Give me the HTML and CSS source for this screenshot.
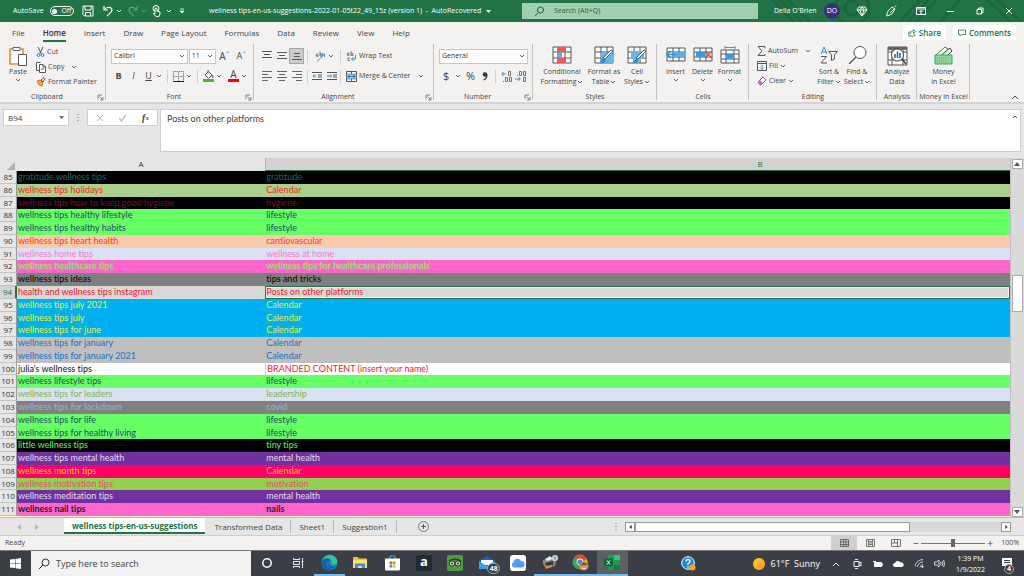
FILE: index.html
```html
<!DOCTYPE html>
<html lang="en">
<head>
<meta charset="utf-8">
<title>wellness tips - Excel</title>
<link rel="stylesheet" href="styles.css">
</head>
<body>
<svg class="defs" aria-hidden="true">
  <symbol id="chev" viewBox="0 0 6 6"><path d="M1 2l2 2 2-2" fill="none" stroke="currentColor"/></symbol>
  <symbol id="launch" viewBox="0 0 7 7"><path d="M1 5V1h4M2.500 2.500l3 3M6 3v3H3" fill="none" stroke="#666" stroke-width=".8"/></symbol>
  <symbol id="gridicon" viewBox="0 0 20 18"><path d="M1 1h18v16H1zM1 6h18M1 12h18M7 1v16M13 1v16" fill="#fff" stroke="#555"/></symbol>
  <symbol id="brush" viewBox="0 0 20 18"><path d="M19 5L11 13l-2-1 8-8z" fill="#fff" stroke="#555"/><path d="M10 12c-3 0-2 4-5 4 3 2 7 1 7-2z" fill="#2b8fd8"/></symbol>
</svg>
<div class="app">
  <header class="titlebar">
    <div class="quick">
      <span class="autosave">AutoSave</span>
      <button class="toggle" aria-label="AutoSave off"><i></i>Off</button>
      <button class="q-save" aria-label="Save"><svg width="12" height="12" viewBox="0 0 12 12"><path d="M1 1h10v10H2.500L1 9.500zM3 1v4h6V1M3.500 11V7.500h5V11" fill="none" stroke="#fff"/></svg></button>
      <button class="q-undo" aria-label="Undo"><svg width="12" height="12" viewBox="0 0 12 12"><path d="M2 1v4h4M2 5c3-4 8-3 8 0 0 2-2 3-5 6" fill="none" stroke="#fff" stroke-width="1.200"/></svg><svg class="chev"><use href="#chev"/></svg></button>
      <button class="q-redo" aria-label="Redo"><svg width="12" height="12" viewBox="0 0 12 12"><path d="M10 1v4H6M10 5c-3-4-8-3-8 0 0 2 2 3 5 6" fill="none" stroke="#fff" stroke-width="1.200"/></svg><svg class="chev"><use href="#chev"/></svg></button>
      <button class="q-touch" aria-label="Touch mode"><svg width="10" height="12" viewBox="0 0 10 12"><circle cx="4" cy="3.500" r="3" fill="none" stroke="#fff"/><path d="M3 9V3.500q1-1 2 0V6l3 1v2l-1 2.500H4L1 8z" fill="#217346" stroke="#fff"/></svg><svg class="chev"><use href="#chev"/></svg></button>
      <button class="q-more" aria-label="Customize toolbar"><svg width="6" height="6" viewBox="0 0 6 6"><path d="M1 1h4M1 3l2 2 2-2z" fill="#fff" stroke="#fff" stroke-width=".8"/></svg></button>
    </div>
    <div class="doc-title">wellness tips-en-us-suggestions-2022-01-05t22_49_15z (version 1) &nbsp;- &nbsp;AutoRecovered <svg width="5" height="5" viewBox="0 0 5 5"><path d="M0 1h5L2.500 4z" fill="#fff"/></svg></div>
    <label class="search"><svg width="11" height="11" viewBox="0 0 11 11"><circle cx="6.500" cy="4" r="3" fill="none" stroke="#1c643c"/><path d="M4.500 6.500L1 10" stroke="#1c643c"/></svg><input type="text" aria-label="Search" placeholder="Search (Alt+Q)"></label>
    <div class="account">
      <svg class="art" viewBox="0 0 266 22" preserveAspectRatio="xMaxYMid slice" aria-hidden="true"><g fill="none" stroke="#1d673f" stroke-width="3"><circle cx="94" cy="8" r="17"/><circle cx="94" cy="8" r="7"/><path d="M10-4l26 26M18-4l26 26M26-4l26 26M140 24l26-28M148 24l26-28M156 24l26-28M180 24l26-28M225-4l30 28M235-4l30 28"/></g></svg>
      <span class="user">Della O'Brien</span><span class="avatar">DO</span>
      <div class="win">
        <button aria-label="Premium"><svg width="12" height="11" viewBox="0 0 12 11"><path d="M3 1h6l2 3-5 6-5-6zM1 4h10M4 4l2 6 2-6-2-3z" fill="none" stroke="#fff"/></svg></button>
        <button aria-label="Draw"><svg width="12" height="12" viewBox="0 0 12 12"><path d="M1.500 11L3 6l4-4 3 2-3 5-5 2M5 8l5-5M11 .5L9.500 2" fill="none" stroke="#fff" stroke-width=".9"/></svg></button>
        <button aria-label="Ribbon display"><svg width="10" height="8" viewBox="0 0 10 8"><path d="M.5.5h9v7h-9zM1 2h8M5 7V3.500M3.500 5L5 3.500 6.500 5" fill="none" stroke="#fff"/></svg></button>
        <button aria-label="Minimize"><svg width="7" height="7" viewBox="0 0 7 7"><path d="M0 3.500h7" stroke="#fff"/></svg></button>
        <button aria-label="Restore"><svg width="8" height="8" viewBox="0 0 8 8"><path d="M1 2.500h4.500V7H1zM2.500 2V1H7v4.500H6" fill="none" stroke="#fff"/></svg></button>
        <button aria-label="Close"><svg width="8" height="8" viewBox="0 0 8 8"><path d="M1 1l6 6M7 1L1 7" stroke="#fff"/></svg></button>
      </div>
    </div>
  </header>

  <nav class="tabs">
    <a href="#">File</a><a href="#" class="on">Home</a><a href="#">Insert</a><a href="#">Draw</a><a href="#">Page Layout</a><a href="#">Formulas</a><a href="#">Data</a><a href="#">Review</a><a href="#">View</a><a href="#">Help</a>
    <div class="share">
      <button><svg width="8" height="8" viewBox="0 0 8 8"><path d="M2.500 3H.8v4h6V5M2.500 5c0-2 1-3 3-3V.5L7.500 3l-2 1.500V3" fill="none" stroke="#217346" stroke-width=".8"/></svg>Share</button>
      <button><svg width="8" height="8" viewBox="0 0 8 8"><path d="M.5 1h7v4.500H3.500L2 7V5.500H.5z" fill="none" stroke="#217346" stroke-width=".8"/></svg>Comments</button>
    </div>
  </nav>

  <section class="ribbon">
    <div class="group g-clip">
      <div class="body">
        <button class="big paste"><svg width="20" height="20" viewBox="0 0 20 20"><path d="M2 3h13v15H2z" fill="#fff" stroke="#ed8a2c" stroke-width="1.600"/><path d="M5 1.500h7v3H5z" fill="#fff" stroke="#666"/><path d="M10.500 8.500h8v11h-8z" fill="#fff" stroke="#555"/></svg><span>Paste</span><svg class="chev"><use href="#chev"/></svg></button>
        <div class="stack">
          <button><svg width="9" height="10" viewBox="0 0 9 10"><path d="M2 0l3.500 7M7 0L3.500 7" stroke="#555"/><circle cx="2.500" cy="8" r="1.500" fill="none" stroke="#2b8fd8"/><circle cx="6.500" cy="8" r="1.500" fill="none" stroke="#2b8fd8"/></svg>Cut</button>
          <button><svg width="10" height="11" viewBox="0 0 10 11"><path d="M3.500 8.500h-3V.5h4M3.500 2.500h3.500l2.500 2.500v5.500h-6zM7 2.500V5h2.500M5 7h3" fill="#fff" stroke="#555"/></svg>Copy <svg class="chev far"><use href="#chev"/></svg></button>
          <button><svg width="10" height="10" viewBox="0 0 10 10"><path d="M1 4l3-1 3 3-1 3-3-1z" fill="#f5a55a" stroke="#e07010"/><path d="M5 3l3-2.500 1 1L7 5z" fill="#fff" stroke="#555"/></svg>Format Painter</button>
        </div>
      </div>
      <div class="foot">Clipboard<svg class="launch"><use href="#launch"/></svg></div>
    </div>

    <div class="group g-font">
      <div class="rows">
        <div class="row r-font1"><button class="combo w-font">Calibri<svg class="chev"><use href="#chev"/></svg></button><button class="combo w-size">11<svg class="chev"><use href="#chev"/></svg></button><button class="grow" aria-label="Increase font">A<sup>ˆ</sup></button><button class="shrink" aria-label="Decrease font">A<sup>ˇ</sup></button></div>
        <div class="row r-font2"><button><b>B</b></button><button><em>I</em></button><button><u>U</u></button><svg class="chev"><use href="#chev"/></svg><i class="sep"></i>
          <button aria-label="Borders"><svg width="11" height="11" viewBox="0 0 11 11"><path d="M.5 0v10M10.500 0v10M0 .5h11M5.500 1v9M1 5.500h9" stroke="#888" stroke-dasharray="1.500 .5" fill="none"/><path d="M0 10.500h11" stroke="#222"/></svg></button><svg class="chev"><use href="#chev"/></svg><i class="sep"></i>
          <button aria-label="Fill color"><svg width="11" height="12" viewBox="0 0 11 12"><path d="M2 5l3.500-3.500L9 5 5.500 8.500zM5 0v3" fill="#fff" stroke="#555"/><path d="M9.500 5v3" stroke="#2b8fd8" stroke-width="1.500"/><path d="M0 10.500h11" stroke="#55b030" stroke-width="3"/></svg></button><svg class="chev"><use href="#chev"/></svg>
          <button class="fontcol" aria-label="Font color">A</button><svg class="chev"><use href="#chev"/></svg></div>
      </div>
      <div class="foot">Font<svg class="launch"><use href="#launch"/></svg></div>
    </div>

    <div class="group g-align">
      <div class="rows">
        <div class="row r-al">
          <button aria-label="Top align"><svg width="10" height="10" viewBox="0 0 10 10"><path d="M0 .5h10M2 3.500h6M0 6.500h10" stroke="#555"/></svg></button>
          <button aria-label="Middle align"><svg width="10" height="10" viewBox="0 0 10 10"><path d="M0 1.500h10M2 4.500h6M0 7.500h10" stroke="#555"/></svg></button>
          <button class="pressed" aria-label="Bottom align"><svg width="10" height="10" viewBox="0 0 10 10"><path d="M2 5.500h6M0 8.500h10M2 2.500h6" stroke="#555"/></svg></button><i class="sep"></i>
          <button class="wide" aria-label="Orientation"><svg width="11" height="11" viewBox="0 0 11 11"><path d="M1 3.500q2-1.500 2 .5v1.500q-2.500 0-2-1.500M5 .5v4.500h2V3H5" stroke="#555" stroke-width=".8" fill="none"/><path d="M2 10.500l7.500-7.500M6.500 3H9.500V6" stroke="#2b8fd8" fill="none"/></svg><svg class="chev"><use href="#chev"/></svg></button><i class="sep"></i>
          <button class="lbl"><svg width="11" height="11" viewBox="0 0 11 11"><path d="M1 2.500q2-1.500 2 .5v1.500q-2.500 0-2-1.500M5 0v4.500h2V2.500H5M4 7H2v2.500h2" stroke="#555" stroke-width=".8" fill="none"/><path d="M9.500 4v4H5.500M7.500 6l-2 2 2 2" stroke="#2b8fd8" fill="none"/></svg>Wrap Text</button>
        </div>
        <div class="row r-al">
          <button aria-label="Align left"><svg width="10" height="10" viewBox="0 0 10 10"><path d="M0 .5h10M0 3.500h6M0 6.500h10M0 9.500h6" stroke="#666"/></svg></button>
          <button aria-label="Center"><svg width="10" height="10" viewBox="0 0 10 10"><path d="M0 .5h10M2 3.500h6M0 6.500h10M2 9.500h6" stroke="#666"/></svg></button>
          <button aria-label="Align right"><svg width="10" height="10" viewBox="0 0 10 10"><path d="M0 .5h10M4 3.500h6M0 6.500h10M4 9.500h6" stroke="#666"/></svg></button><i class="sep"></i>
          <button class="wide two" aria-label="Indent"><svg width="10" height="10" viewBox="0 0 10 10"><path d="M0 1.500h10M6 4h4M6 6h4M0 8.500h10" stroke="#555"/><path d="M4.500 5H1M2.500 3.500L1 5l1.500 1.500" stroke="#2b8fd8" fill="none"/></svg><svg width="10" height="10" viewBox="0 0 10 10"><path d="M0 1.500h10M6 4h4M6 6h4M0 8.500h10" stroke="#555"/><path d="M0 5h4.500M3 3.500L4.500 5 3 6.500" stroke="#2b8fd8" fill="none"/></svg></button><i class="sep"></i>
          <button class="lbl"><svg width="11" height="11" viewBox="0 0 11 11"><path d="M.5.5h10v10H.5zM5.500 0v11" fill="#fff" stroke="#555"/><path d="M.5 3h10v5H.5z" fill="#9fd0f2" stroke="#555" stroke-width=".6"/><path d="M2 5.500h7M3.500 4L2 5.500 3.500 7M7.500 4L9 5.500 7.500 7" fill="none" stroke="#1c78c0"/></svg>Merge &amp; Center <svg class="chev"><use href="#chev"/></svg></button>
        </div>
      </div>
      <div class="foot">Alignment<svg class="launch"><use href="#launch"/></svg></div>
    </div>

    <div class="group g-num">
      <div class="rows">
        <div class="row"><button class="combo w-num">General<svg class="chev"><use href="#chev"/></svg></button></div>
        <div class="row r-num"><button>$</button><svg class="chev"><use href="#chev"/></svg><button>%</button><button aria-label="Comma style"><svg width="6" height="9" viewBox="0 0 6 9"><circle cx="3" cy="2.500" r="2.300" fill="#333"/><path d="M5 2.500q0 4-3.500 5.500" fill="none" stroke="#333" stroke-width="1.200"/></svg></button><i class="sep"></i>
          <button aria-label="Increase decimal"><svg width="11" height="11" viewBox="0 0 11 11"><path d="M5 3H1M2.500 1L.8 3l1.700 2" fill="none" stroke="#2b8fd8"/><path d="M7.500.5h2v4h-2zM4.500 6.500h2v4h-2zM8.500 6.500h2v4h-2zM2 10.500h1" fill="none" stroke="#555" stroke-width=".8"/></svg></button>
          <button aria-label="Decrease decimal"><svg width="11" height="11" viewBox="0 0 11 11"><path d="M0 8h5M3.500 6l1.700 2-1.700 2" fill="none" stroke="#2b8fd8"/><path d="M4.500.5h2v4h-2zM8.500.5h2v4h-2zM8.500 6.500h2v4h-2zM2 4.500h1" fill="none" stroke="#555" stroke-width=".8"/></svg></button></div>
      </div>
      <div class="foot">Number<svg class="launch"><use href="#launch"/></svg></div>
    </div>

    <div class="group g-styles">
      <div class="body">
        <button class="big w-a"><svg width="20" height="18" viewBox="0 0 20 18"><use href="#gridicon"/><path d="M5 1h9v5H5zM5 12h9v5H5z" fill="#f0595c"/><path d="M5 6.500h5v5H5z" fill="#5aaee8"/></svg><span>Conditional</span><span>Formatting<svg class="chev"><use href="#chev"/></svg></span></button>
        <button class="big w-b"><svg width="20" height="18" viewBox="0 0 20 18"><use href="#gridicon"/><path d="M7 6h12v11H7z" fill="#6ab5ea"/><use href="#brush"/></svg><span>Format as</span><span>Table<svg class="chev"><use href="#chev"/></svg></span></button>
        <button class="big w-c"><svg width="20" height="18" viewBox="0 0 20 18"><use href="#gridicon"/><path d="M4 5h13v8H4z" fill="#6ab5ea"/><use href="#brush"/></svg><span>Cell</span><span>Styles<svg class="chev"><use href="#chev"/></svg></span></button>
      </div>
      <div class="foot">Styles</div>
    </div>

    <div class="group g-cells">
      <div class="body">
        <button class="big w-d"><svg width="20" height="18" viewBox="0 0 20 18"><path d="M1 2h18v13H1zM1 6h18M1 11h18M7 2v13M13 2v13" fill="#fff" stroke="#555"/><path d="M6 6h13v5H6z" fill="#5aaee8"/><path d="M9 8.500H1M4.500 5L1 8.500 4.500 12" fill="none" stroke="#2b8fd8" stroke-width="1.500"/></svg><span>Insert</span><svg class="chev"><use href="#chev"/></svg></button>
        <button class="big w-d"><svg width="20" height="18" viewBox="0 0 20 18"><path d="M1 2h18v13H1zM1 6h18M1 11h18M7 2v13M13 2v13" fill="#fff" stroke="#555"/><path d="M3 6h9v5H3z" fill="#3a9ae0"/><path d="M12 5l7 7M19 5l-7 7" stroke="#f04a3a" stroke-width="1.500"/></svg><span>Delete</span><svg class="chev"><use href="#chev"/></svg></button>
        <button class="big w-d"><svg width="20" height="18" viewBox="0 0 20 18"><path d="M1 4h18v13H1zM1 8h18M1 13h18M6 4v13M14 4v13" fill="#fff" stroke="#555"/><path d="M6 8h8v5H6z" fill="#3a9ae0"/><path d="M5 1.500h10M5 0v3M15 0v3" stroke="#3a9ae0"/></svg><span>Format</span><svg class="chev"><use href="#chev"/></svg></button>
      </div>
      <div class="foot">Cells</div>
    </div>

    <div class="group g-edit">
      <div class="body">
        <div class="stack">
          <button><svg width="9" height="10" viewBox="0 0 9 10"><path d="M8 2V.5H1L5 5 1 9.500h7V8" fill="none" stroke="#555"/></svg>AutoSum<svg class="chev far"><use href="#chev"/></svg></button>
          <button><svg width="10" height="10" viewBox="0 0 10 10"><path d="M.5.5h9v9h-9zM.5 2.500h9" fill="#fff" stroke="#555"/><path d="M5 3.500v5M3 6.500l2 2 2-2" fill="none" stroke="#2b8fd8"/></svg>Fill<svg class="chev"><use href="#chev"/></svg></button>
          <button><svg width="10" height="10" viewBox="0 0 10 10"><path d="M1 6l5-5 3 3-5 5H3z" fill="#fff" stroke="#8a4a9e"/><path d="M1 6l2-2 3 3-2 2H3z" fill="#c86ad0"/></svg>Clear<svg class="chev"><use href="#chev"/></svg></button>
        </div>
        <button class="big w-e"><svg width="20" height="18" viewBox="0 0 20 18"><path d="M2 8l3-7 3 7M3 6h4" stroke="#2b8fd8" fill="none"/><path d="M2 10.500h5.500L2 17h6" stroke="#555" fill="none"/><path d="M9.500 5.500h9L15.500 9v4l-3 1.500V9z" stroke="#555" fill="none"/></svg><span>Sort &amp;</span><span>Filter<svg class="chev"><use href="#chev"/></svg></span></button>
        <button class="big w-e"><svg width="20" height="18" viewBox="0 0 20 18"><circle cx="13" cy="6.500" r="6" fill="#fff" stroke="#555"/><path d="M9 11l-7 7" stroke="#555" stroke-width="1.300"/></svg><span>Find &amp;</span><span>Select<svg class="chev"><use href="#chev"/></svg></span></button>
      </div>
      <div class="foot">Editing</div>
    </div>

    <div class="group g-ana">
      <div class="body"><button class="big w-full"><svg width="21" height="20" viewBox="0 0 21 20"><path d="M1 1h19v18H1zM1 6h19M1 14h19M5 1v18M16 1v18" fill="#fff" stroke="#555"/><path d="M1 1h19v3H1z" fill="#666"/><circle cx="10.500" cy="9" r="6" fill="#fff" stroke="#444"/><path d="M8 12V8M10.500 12V5.500" stroke="#555" stroke-width="1.500"/><path d="M13 12V7" stroke="#2b8fd8" stroke-width="2"/><path d="M15 13l4 5" stroke="#444" stroke-width="1.500"/></svg><span>Analyze</span><span>Data</span></button></div>
      <div class="foot">Analysis</div>
    </div>

    <div class="group g-money">
      <div class="body"><button class="big w-full"><svg width="20" height="19" viewBox="0 0 20 19"><path d="M2 9l9-8 6 4-6 7z" fill="#fff" stroke="#2c8a4a"/><path d="M6 10l10-8 2 3-7 7z" fill="#dff2e0" stroke="#444"/><path d="M1 9h17v9H1z" fill="#8fd19e" stroke="#2fae50"/><path d="M3 12h12M3 15h12" stroke="#4fba69" stroke-dasharray="1 1"/></svg><span>Money</span><span>in Excel</span></button></div>
      <div class="foot">Money in Excel</div>
    </div>
    <button class="collapse" aria-label="Collapse ribbon"><svg width="8" height="6" viewBox="0 0 8 6"><path d="M1 5l3-3 3 3" fill="none" stroke="#444"/></svg></button>
  </section>

  <section class="formula">
    <button class="namebox">B94<svg width="5" height="5" viewBox="0 0 5 5"><path d="M0 1h5L2.500 4z" fill="#666"/></svg></button>
    <span class="dots"></span>
    <div class="fxbox">
      <button aria-label="Cancel"><svg width="8" height="8" viewBox="0 0 8 8"><path d="M1 1l6 6M7 1L1 7" stroke="#bbb"/></svg></button>
      <button aria-label="Enter"><svg width="9" height="8" viewBox="0 0 9 8"><path d="M1 4l2.500 3L8 1" fill="none" stroke="#bbb" stroke-width="1.300"/></svg></button>
      <button class="fx" aria-label="Insert function">f<small>x</small></button>
    </div>
    <textarea class="entry" aria-label="Formula bar">Posts on other platforms</textarea>
    <button class="expand" aria-label="Collapse formula bar"><svg width="6" height="5" viewBox="0 0 6 5"><path d="M1 4l2-2 2 2" fill="none" stroke="#555"/></svg></button>
  </section>

  <main class="sheet">
    <table>
      <thead><tr><th class="corner"><svg width="8" height="8" viewBox="0 0 8 8"><path d="M8 0v8H0z" fill="#b2b2b2"/></svg></th><th>A</th><th class="sel">B</th></tr></thead>
      <tbody>
        <tr class="c-teal"><th>85</th><td>gratitude wellness tips</td><td>gratitude</td></tr>
        <tr class="c-olive"><th>86</th><td>wellness tips holidays</td><td>Calendar</td></tr>
        <tr class="c-wine"><th>87</th><td>wellness tips how to keep good hygiene</td><td>hygiene</td></tr>
        <tr class="c-green"><th>88</th><td>wellness tips healthy lifestyle</td><td>lifestyle</td></tr>
        <tr class="c-green"><th>89</th><td>wellness tips healthy habits</td><td>lifestyle</td></tr>
        <tr class="c-peach"><th>90</th><td>wellness tips heart health</td><td>cardiovascular</td></tr>
        <tr class="c-lilac"><th>91</th><td>wellness home tips</td><td>wellness at home</td></tr>
        <tr class="c-pink"><th>92</th><td>wellness healthcare tips</td><td>wellness tips for healthcare professionals</td></tr>
        <tr class="c-grey"><th>93</th><td>wellness tips ideas</td><td>tips and tricks</td></tr>
        <tr class="c-active"><th>94</th><td>health and wellness tips instagram</td><td>Posts on other platforms</td></tr>
        <tr class="c-blue"><th>95</th><td>wellness tips july 2021</td><td>Calendar</td></tr>
        <tr class="c-blue"><th>96</th><td>wellness tips july</td><td>Calendar</td></tr>
        <tr class="c-blue"><th>97</th><td>wellness tips for june</td><td>Calendar</td></tr>
        <tr class="c-silver"><th>98</th><td>wellness tips for january</td><td>Calendar</td></tr>
        <tr class="c-silver"><th>99</th><td>wellness tips for january 2021</td><td>Calendar</td></tr>
        <tr class="c-white"><th>100</th><td>julia's wellness tips</td><td>BRANDED CONTENT (insert your name)</td></tr>
        <tr class="c-green"><th>101</th><td>wellness lifestyle tips</td><td>lifestyle</td></tr>
        <tr class="c-leaf"><th>102</th><td>wellness tips for leaders</td><td>leadership</td></tr>
        <tr class="c-slate"><th>103</th><td>wellness tips for lockdown</td><td>covid</td></tr>
        <tr class="c-green"><th>104</th><td>wellness tips for life</td><td>lifestyle</td></tr>
        <tr class="c-green"><th>105</th><td>wellness tips for healthy living</td><td>lifestyle</td></tr>
        <tr class="c-black"><th>106</th><td>little wellness tips</td><td>tiny tips</td></tr>
        <tr class="c-purple"><th>107</th><td>wellness tips mental health</td><td>mental health</td></tr>
        <tr class="c-hot"><th>108</th><td>wellness month tips</td><td>Calendar</td></tr>
        <tr class="c-lime"><th>109</th><td>wellness motivation tips</td><td>motivation</td></tr>
        <tr class="c-purple"><th>110</th><td>wellness meditation tips</td><td>mental health</td></tr>
        <tr class="c-nail"><th>111</th><td>wellness nail tips</td><td>nails</td></tr>
      </tbody>
    </table>
    <div class="vscroll">
      <button aria-label="Scroll up"><svg width="6" height="4" viewBox="0 0 6 4"><path d="M0 4h6L3 0z" fill="#555"/></svg></button>
      <span class="v-a"></span><span class="v-thumb"></span><span class="v-b"></span>
      <button aria-label="Scroll down"><svg width="6" height="4" viewBox="0 0 6 4"><path d="M0 0h6L3 4z" fill="#555"/></svg></button>
    </div>
  </main>

  <nav class="sheets">
    <div class="nav"><svg width="4" height="6" viewBox="0 0 4 6"><path d="M4 0v6L0 3z" fill="#bbb"/></svg><svg width="4" height="6" viewBox="0 0 4 6"><path d="M0 0v6l4-3z" fill="#bbb"/></svg></div>
    <a href="#" class="on">wellness tips-en-us-suggestions</a><a href="#">Transformed Data</a><a href="#">Sheet1</a><a href="#">Suggestion1</a>
    <button class="add" aria-label="New sheet"><svg width="11" height="11" viewBox="0 0 11 11"><circle cx="5.500" cy="5.500" r="5" fill="none" stroke="#777"/><path d="M3 5.500h5M5.500 3v5" stroke="#555"/></svg></button>
    <span class="dots"></span>
    <div class="hscroll"><button aria-label="Scroll left"><svg width="3" height="4" viewBox="0 0 4 6"><path d="M4 0v6L0 3z" fill="#444"/></svg></button><span class="h-thumb"></span><span class="h-rest"></span><button aria-label="Scroll right"><svg width="3" height="4" viewBox="0 0 4 6"><path d="M0 0v6l4-3z" fill="#444"/></svg></button></div>
  </nav>

  <div class="status">
    <span>Ready</span>
    <div class="views">
      <button class="on" aria-label="Normal view"><svg width="9" height="8" viewBox="0 0 9 8"><path d="M.5.5h8v7h-8zM0 3h9M0 5.500h9M3.500 0v8M6 0v8" fill="none" stroke="#555" stroke-width=".8"/></svg></button>
      <button aria-label="Page layout view"><svg width="9" height="8" viewBox="0 0 9 8"><path d="M.5.5h8v7h-8zM2.500 1v6M6.500 1v6M3 2.500h3M3 4h3M3 5.500h3" fill="none" stroke="#555" stroke-width=".8"/></svg></button>
      <button aria-label="Page break view"><svg width="10" height="8" viewBox="0 0 10 8"><path d="M.5.5h9v7h-9zM3.500 1v3h3V1M.5 4h3M6.500 4v3.500" fill="none" stroke="#555" stroke-width=".8"/></svg></button>
    </div>
    <button class="zb">−</button><input class="zoom" type="range" aria-label="Zoom" value="50"><button class="zb">+</button>
    <span class="pct">100%</span>
  </div>

  <footer class="taskbar">
    <button class="start" aria-label="Start"><svg width="11" height="11" viewBox="0 0 11 11"><path d="M0 1.500L5 1v4H0zM5.500.9L11 0v5H5.500zM0 5.500h5v4.500L0 9.500zM5.500 5.500H11V11l-5.500-.8z" fill="#fff"/></svg></button>
    <label class="tsearch"><svg width="12" height="12" viewBox="0 0 12 12"><circle cx="7.500" cy="4.500" r="3.500" fill="none" stroke="#333"/><path d="M5 7L1 11" stroke="#333"/></svg><input type="text" aria-label="Windows search" placeholder="Type here to search"></label>
    <div class="apps">
      <button aria-label="Cortana"><svg width="12" height="12" viewBox="0 0 12 12"><circle cx="6" cy="6" r="4.200" fill="none" stroke="#fff" stroke-width="1.500"/></svg></button>
      <button aria-label="Task view"><svg width="12" height="12" viewBox="0 0 12 12"><path d="M1.500 4.500h6v3h-6zM1.500 1v1.500h6V1M1.500 11V9.500h6V11M10.500 1v10M9.500 4.500h2" fill="none" stroke="#fff" stroke-width=".9"/></svg></button>
      <button class="run" aria-label="Edge"><svg width="17" height="17" viewBox="0 0 17 17"><circle cx="8.500" cy="8.500" r="8" fill="#1b7fd0"/><path d="M1 7C3 0 14-1 16.300 7c.5 4-4 4.500-6 3 2-3-3-6-9.300-3z" fill="#35c49a"/><path d="M1 7c2-3 8-4 9 0-4-1-6 4-2 7 2 1.500 5 1 6-1-2 5-13 6-13.500-6z" fill="#1262b0"/><path d="M8 8c-2 3 2 6 6 4.500l-1 1C9 15 5 11 8 8z" fill="#3b3f44"/></svg></button>
      <button aria-label="Explorer"><svg width="15" height="13" viewBox="0 0 15 13"><path d="M0 1h5l1 1.500h8V12H0z" fill="#f0b93a"/><path d="M0 4h14v8H0z" fill="#fcdc74"/><path d="M2 12V7.500h10V12h-3v-2H5v2z" fill="#3a8fd8"/></svg></button>
      <button aria-label="Store"><svg width="15" height="16" viewBox="0 0 15 16"><path d="M5 4V1h5v3" fill="none" stroke="#3ab2f0"/><path d="M0 3.500h15V14q0 1.500-1.500 1.500h-12Q0 15.500 0 14z" fill="#fff"/><path d="M4.500 6.500h2.700v2.700H4.500z" fill="#f25022"/><path d="M7.800 6.500h2.700v2.700H7.800z" fill="#7fba00"/><path d="M4.500 9.800h2.700v2.700H4.500z" fill="#00a4ef"/><path d="M7.800 9.800h2.700v2.700H7.800z" fill="#ffb900"/></svg></button>
      <button aria-label="Amazon"><span class="amazon">a</span></button>
      <button aria-label="Tripadvisor"><svg width="16" height="16" viewBox="0 0 16 16"><rect width="16" height="16" rx="2" fill="#4f9a41"/><path d="M2 6q6-4 12 0" stroke="#222" fill="none"/><circle cx="5" cy="8.500" r="2.700" fill="#d8e8c0" stroke="#222"/><circle cx="11" cy="8.500" r="2.700" fill="#d8e8c0" stroke="#222"/><circle cx="5" cy="8.500" r="1" fill="#222"/><circle cx="11" cy="8.500" r="1" fill="#222"/></svg></button>
      <button class="mail" aria-label="Mail"><svg width="16" height="13" viewBox="0 0 16 13"><path d="M0 5l8-5 8 5v8H0z" fill="#1564b8"/><path d="M2 4h12v5H2z" fill="#fff"/><path d="M0 5l8 5 8-5v8H0z" fill="#3aa0ea"/></svg><span>48</span></button>
      <button aria-label="iCloud"><svg width="16" height="16" viewBox="0 0 16 16"><rect width="16" height="16" rx="3" fill="#fff"/><path d="M4 12.500a3 3 0 0 1-.5-5.500 4 4 0 0 1 7.500-1 3.300 3.300 0 0 1 1 6.500z" fill="#4a9ff0"/></svg></button>
      <button class="run" aria-label="Fax"><svg width="16" height="15" viewBox="0 0 16 15"><path d="M1 5l9-2 4 3-1 5-9 2-3-4z" fill="#888"/><path d="M3 4l5-3 3 3-6 2z" fill="#e8e8e8"/><path d="M3 8l8-2v4l-6 2z" fill="#333"/><path d="M3 11l7-1v2l-6 2z" fill="#e08a30"/><circle cx="13" cy="3" r="3" fill="#cde"/><path d="M13 1.500v3" stroke="#245" /></svg></button>
      <button class="run" aria-label="Chrome"><svg width="17" height="17" viewBox="0 0 17 17"><circle cx="8" cy="8" r="7.500" fill="#34a853"/><path d="M1.500 4.300A7.500 7.500 0 0 1 14.800 5H8z" fill="#ea4335"/><path d="M14.800 5A7.500 7.500 0 0 1 8 15.500L11 8z" fill="#fbbc05"/><circle cx="8" cy="8" r="3.400" fill="#fff"/><circle cx="8" cy="8" r="2.600" fill="#4285f4"/><circle cx="12" cy="12" r="4.500" fill="#d98a5c"/><path d="M8 11q4-5 8 0z" fill="#8a4a2a"/><path d="M10 14q2 1 4 0" stroke="#fff"/></svg></button>
      <button class="run cur" aria-label="Excel"><svg width="16" height="15" viewBox="0 0 16 15"><path d="M4 0h12v15H4z" fill="#1f9a5a"/><path d="M10 0h6v5h-6z" fill="#33c481"/><path d="M10 10h6v5h-6z" fill="#107c41"/><path d="M0 3.500h9v8H0z" fill="#0e6b38"/><path d="M3 5.500l3 4M6 5.500l-3 4" stroke="#fff"/></svg></button>
    </div>
    <div class="tray">
      <button class="helpic" aria-label="Help"><svg width="15" height="15" viewBox="0 0 15 15"><circle cx="7" cy="7" r="6.300" fill="#1c86d8" stroke="#fff"/><path d="M5 5.500q0-2 2-2t2 2q0 1-2 2V9M7 10v1.500" fill="none" stroke="#fff" stroke-width="1.300"/><circle cx="11.500" cy="11.500" r="3" fill="#f6a623"/></svg></button>
      <button class="weather"><i class="sun"></i>61°F &nbsp;Sunny</button>
      <div class="icons">
        <button aria-label="Hidden icons"><svg width="8" height="6" viewBox="0 0 8 6"><path d="M1 5l3-3 3 3" fill="none" stroke="#fff"/></svg></button>
        <button aria-label="Meet now"><svg width="9" height="10" viewBox="0 0 9 10"><path d="M1 2.500h5v5H1zM6 4l2-1v4L6 6M2 .5h3M2 9.500h3" fill="none" stroke="#fff" stroke-width=".9"/></svg></button>
        <button aria-label="Battery"><svg width="10" height="8" viewBox="0 0 10 8"><path d="M1.500 2.500h7v4h-7z" fill="#fff" stroke="#fff"/><path d="M9.500 3.500v2M0 1.500h3" stroke="#fff"/></svg></button>
        <button aria-label="OneDrive"><svg width="11" height="8" viewBox="0 0 11 8"><path d="M2 7a2 2 0 0 1 0-4 3 3 0 0 1 5.500-.5A2.300 2.300 0 0 1 9 7z" fill="#fff"/></svg></button>
        <button aria-label="Wi-Fi"><svg width="9" height="9" viewBox="0 0 9 9"><path d="M0 7.500Q1 1 8 .5M2.500 8Q3 3.500 8 3M5 8.300Q5.500 6 8 5.500" fill="none" stroke="#ccc"/><circle cx="7.500" cy="7.800" r="1" fill="#fff"/></svg></button>
        <button aria-label="Volume"><svg width="11" height="9" viewBox="0 0 11 9"><path d="M.5 3h2L5 1v7L2.500 6h-2zM6.500 3q1 1.500 0 3M8 2q2 2.500 0 5M9.500 1q2.500 3.500 0 7" fill="none" stroke="#fff" stroke-width=".8"/></svg></button>
      </div>
      <button class="clock"><span>1:39 PM</span><span>1/9/2022</span></button>
      <button class="notif" aria-label="Notifications"><svg width="11" height="11" viewBox="0 0 11 11"><path d="M0 0h10v8H5L3 10V8H0z" fill="#fff"/><path d="M2 2.500h6M2 4.500h6" stroke="#3b3f44"/></svg><span>4</span></button>
    </div>
  </footer>
</div>
</body>
</html>
```
FILE: styles.css
```css
* { box-sizing: border-box; }
body { margin: 0; font: 7px/10px "Open Sans", "Noto Sans", sans-serif; color: #444; }
button { border: 0; padding: 0; margin: 0; background: none; font: inherit; color: inherit; display: flex; align-items: center; justify-content: center; }
input, textarea { font: inherit; border: 0; padding: 0; outline: 0; background: none; min-width: 0; }
a { color: inherit; text-decoration: none; }
svg { flex: none; display: block; }
.defs { position: absolute; width: 0; height: 0; }
.chev { width: 6px; height: 6px; color: #666; }
.app { display: flex; flex-direction: column; height: 100vh; min-width: 1000px; overflow: hidden; background: #e6e6e6; }

.titlebar { flex: none; display: grid; grid-template-columns: 209px 313px 236px 1fr; align-items: center; height: 22px; background: #217346; color: #fff; }
.titlebar .chev { color: #fff; }
.quick { display: flex; align-items: center; padding-left: 13px; }
.autosave { width: 37px; white-space: nowrap; }
.toggle { width: 24px; height: 10px; border: 1px solid #fff; border-radius: 5px; gap: 4px; margin-right: 8px; }
.toggle i { width: 5px; height: 5px; border-radius: 50%; background: #fff; }
.q-save { width: 20px; justify-content: flex-start; }
.q-undo, .q-redo { gap: 2px; width: 25px; justify-content: flex-start; }
.q-redo { opacity: .3; }
.q-touch { gap: 4px; width: 27px; justify-content: flex-start; }
.doc-title { display: flex; align-items: center; gap: 5px; white-space: nowrap; }
.search { display: flex; align-items: center; gap: 9px; height: 16px; padding-left: 12px; background: #a0cfb4; color: #1c643c; }
.search input { flex: 1; color: #1c643c; }
.search input::placeholder { color: #1c643c; opacity: 1; }
.account { position: relative; display: flex; align-items: center; height: 22px; padding-left: 16px; overflow: hidden; }
.art { position: absolute; inset: 0; width: 100%; height: 100%; }
.user { position: relative; width: 50px; white-space: nowrap; }
.avatar { position: relative; width: 16px; height: 16px; border-radius: 50%; background: #373277; line-height: 16px; text-align: center; }
.win { position: relative; display: flex; width: 177px; margin-left: auto; }
.win button { flex: 1; }

.tabs { flex: none; display: flex; align-items: center; gap: 18px; height: 21px; padding: 0 19px 0 12px; background: #f3f2f1; font-size: 8px; }
.tabs a { height: 18px; line-height: 17px; white-space: nowrap; }
.tabs .on { font-weight: 600; color: #333; border-bottom: 2px solid #217346; }
.share { display: flex; gap: 7px; margin-left: auto; margin-right: -11px; }
.share button { height: 15px; padding: 0 5px; gap: 3px; background: #fff; color: #217346; font-weight: 600; border-radius: 1px; }

.ribbon { flex: none; display: flex; height: 61px; background: #f3f2f1; border-bottom: 2px solid #d4d4d4; }
.group { display: flex; flex-direction: column; height: 59px; position: relative; }
.group::after { content: ""; position: absolute; right: 0; top: 1px; bottom: 2px; width: 1px; background: #c4c2c0; }
.g-clip { width: 106px; } .g-font { width: 148px; } .g-align { width: 180px; } .g-num { width: 99px; }
.g-styles { width: 124px; } .g-cells { width: 92px; } .g-edit { width: 128px; } .g-ana { width: 40px; } .g-money { width: 53px; }
.body { flex: 1; min-height: 0; display: flex; }
.foot { height: 11px; line-height: 12px; text-align: center; position: relative; white-space: nowrap; }
.g-clip .foot, .g-font .foot, .g-align .foot, .g-num .foot { padding-right: 12px; }
.launch { position: absolute; right: 2px; top: 3px; width: 7px; height: 7px; }
.big { flex-direction: column; justify-content: flex-start; padding-top: 3px; white-space: nowrap; }
.big > svg:first-child { margin-bottom: 1px; }
.big > svg:first-child[height="18"] { margin-bottom: 3px; }
.big > svg:first-child[height="19"] { margin-bottom: 2px; }
.big > span { display: flex; align-items: center; gap: 1px; }
.paste { width: 36px; }
.stack { display: flex; flex-direction: column; gap: 5px; padding-top: 4px; white-space: nowrap; }
.stack button { height: 10px; gap: 2px; justify-content: flex-start; }
.stack .far { margin-left: 5px; }
.g-edit .stack { padding: 3px 0 0 8px; width: 66px; }
.g-styles .body { padding-left: 5px; }
.w-a { width: 48px; } .w-b { width: 36px; } .w-c { width: 30px; } .w-d { width: 27px; } .w-e { width: 28px; } .w-full { width: 100%; }
.g-cells .body { padding-left: 5px; }

.rows { flex: 1; display: flex; flex-direction: column; gap: 6px; padding: 6px 5px 0; }
.row { display: flex; align-items: center; height: 14px; }
.combo { height: 15px; padding: 0 2px; background: #fff; border: 1px solid #c8c6c4; justify-content: space-between; color: #333; }
.w-font { width: 78px; } .w-size { width: 27px; } .w-num { width: 89px; }
.grow, .shrink { font-size: 10px; width: 16px; }
.shrink { font-size: 9px; }
.row sup { color: #2b8fd8; font-size: 9px; line-height: 6px; }
.r-font1 { gap: 1px; }
.r-font2 { font-size: 9px; }
.r-font2 button { width: 15px; }
.r-font2 .chev { margin-right: 2px; }
.sep { width: 1px; height: 13px; background: #d2d0ce; margin: 0 3px; }
.fontcol { height: 12px; line-height: 9px; font-size: 10px; border-bottom: 3px solid #f00; }
.r-font2 .fontcol { width: 11px; margin: 0 2px 0 4px; }
.r-al button { width: 15px; height: 14px; }
.r-al .pressed { background: #cdcbc9; outline: 1px solid #a8a6a4; width: 13px; margin: 0 1px; }
.r-al .wide { width: 26px; gap: 2px; }
.r-al .two { gap: 5px; }
.r-al .lbl { width: auto; gap: 2px; margin-left: 2px; white-space: nowrap; }
.lbl .chev { margin-left: 6px; }
.r-num { font-size: 11px; }
.r-num button { width: 15px; }
.r-num .chev { margin: 0 2px; }
.collapse { margin: auto 5px 2px auto; }

.formula { flex: none; display: flex; align-items: flex-start; height: 54px; padding: 5px 3px 0; position: relative; font-size: 8px; }
.namebox { width: 66px; height: 17px; padding: 0 4px; justify-content: space-between; background: #fff; border: 1px solid #cfcfcf; }
.dots { width: 2px; height: 8px; margin: 5px 8px; background: repeating-linear-gradient(#aaa 0 1px, transparent 1px 3px); }
.fxbox { display: flex; width: 71px; height: 17px; margin-right: 2px; background: #fff; border: 1px solid #cfcfcf; }
.fxbox button { flex: 1; }
.fx { font: italic bold 10px "Liberation Serif", serif; }
.fx small { font-size: 7px; }
.entry { flex: 1; height: 43px; padding: 3px 6px; resize: none; background: #fff; border: 1px solid #cfcfcf; color: #444; font: 9px/11px Lato, sans-serif; font-variant-ligatures: none; }
.expand { position: absolute; right: 6px; top: 10px; }

.sheet { flex: 1; min-height: 0; display: flex; background: #fff2cc; }
.sheet table { flex: 1; display: flex; flex-direction: column; padding-bottom: 1px; font: 9px/12px Lato, "Open Sans", sans-serif; font-variant-ligatures: none; }
.sheet tr { display: grid; grid-template-columns: 17px 1fr 3fr; }
.sheet th { font: 8px/12px "Open Sans", sans-serif; background: #e6e6e6; text-align: center; padding: 0; color: #333; }
.sheet thead tr { height: 13px; border-bottom: 1px solid #9aa89f; background: #e6e6e6; }
.sheet thead .sel { background: #d2d2d2; border-left: 1px solid #b0b0b0; border-bottom: 1px solid #217346; color: #217346; padding-left: 244px; }
.sheet .corner { display: flex; align-items: flex-end; justify-content: flex-end; padding: 0 2px 1px 0; }
.sheet tbody { flex: 1; min-height: 0; display: grid; grid-template-rows: repeat(27, minmax(0, 1fr)); }
.sheet tbody th { line-height: 11px; border-right: 1px solid #9a9a9a; border-bottom: 1px solid #c4c4c4; white-space: nowrap; }
.sheet td { padding: 0 1px; white-space: nowrap; overflow: hidden; }
.c-teal { background: #000; color: #0b6b6b; }
.c-olive { background: #a9d08e; color: #f02a20; }
.c-wine { background: #000; color: #7a0c34; }
.c-green { background: #66ff66; color: #1f4e5f; }
.c-peach { background: #f8cbad; color: #ff4010; }
.c-lilac { background: #d9e1f2; color: #f07cd4; }
.c-pink { background: #ff66cc; color: #8fe070; }
.c-grey { background: #808080; color: #000; }
.c-active { background: #d9d9d9; color: #f01c1c; }
.sheet .c-active th { background: #d2d2d2; color: #217346; border-right: 2px solid #217346; }
.c-active td:last-child { outline: 1px solid #217346; outline-offset: -1px; box-shadow: inset 0 0 0 2px #f4f4f4; }
.c-blue { background: #00b0f0; color: #e8f030; }
.c-silver { background: #bfbfbf; color: #1f70c0; }
.c-white { background: #fff; color: #111; }
.c-white td:last-child { color: #f01c1c; border-left: 1px solid #d4d4d4; }
.c-leaf { background: #d9e1f2; color: #80b45c; }
.c-slate { background: #808080; color: #9cb2d4; }
.c-black { background: #000; color: #66f066; }
.c-purple { background: #7030a0; color: #e6daee; }
.c-hot { background: #ff0066; color: #ffc81c; }
.c-lime { background: #92d050; color: #e0506c; }
.c-nail { background: #ff66cc; color: #222; }
.c-nail td, .c-pink td { font-weight: 700; }

.vscroll { width: 14px; display: flex; flex-direction: column; align-items: center; padding: 1px 2px 0 1px; background: #dadada; border-left: 1px solid #c0c0c0; }
.vscroll button { width: 11px; height: 10px; background: #fff; border: 1px solid #aaa; }
.v-a { flex: 107; } .v-b { flex: 197; }
.v-thumb { flex: 35; width: 11px; background: #fff; border: 1px solid #aaa; }

.sheets { flex: none; display: flex; align-items: center; height: 19px; padding-right: 13px; border-top: 1px solid #bdbdbd; border-bottom: 1px solid #cfcfcf; font-size: 8px; white-space: nowrap; }
.nav { display: flex; width: 64px; padding-left: 17px; gap: 14px; }
.sheets a { padding: 0 8px; line-height: 13px; border-right: 1px solid #b8b8b8; }
.sheets .on { align-self: flex-start; height: 16px; line-height: 15px; margin-right: 1px; background: #fff; color: #217346; font-weight: 700; border-right: 0; border-bottom: 2px solid #217346; }
.add { margin-left: 21px; }
.sheets .dots { margin: 0 8px 0 auto; }
.hscroll { display: flex; width: 386px; height: 10px; background: #d9d9d9; }
.hscroll button { width: 10px; background: #fff; border: 1px solid #999; }
.h-thumb { flex: 274; background: #fff; border: 1px solid #999; }
.h-rest { flex: 92; }

.status { flex: none; display: flex; align-items: center; height: 14px; padding: 0 5px; background: #f3f2f1; }
.views { display: flex; height: 14px; margin-left: auto; margin-right: 2px; }
.views button { width: 26px; }
.views .on { background: #d0cfce; }
.zb { width: 10px; font-size: 10px; }
.zoom { appearance: none; width: 64px; height: 9px; margin: 0; background: linear-gradient(#777, #777) center / 100% 1px no-repeat; }
.zoom::-webkit-slider-thumb { appearance: none; width: 4px; height: 8px; background: #666; }
.pct { width: 24px; text-align: right; }

.taskbar { flex: none; display: flex; height: 26px; background: #3b3f45; border-top: 1px solid #777; color: #fff; font-size: 9px; }
.start { width: 31px; }
.tsearch { display: flex; align-items: center; gap: 6px; width: 220px; padding-left: 7px; background: #f2f2f2; }
.tsearch input { flex: 1; }
.tsearch input::placeholder { color: #444; opacity: 1; }
.apps { display: flex; width: 377px; }
.apps button { flex: 1; border-bottom: 2px solid transparent; }
.apps .run { border-bottom-color: #76b9ed; }
.apps .cur { background: #5c6065; }
.amazon { width: 16px; height: 16px; background: #222a33; border-radius: 1px; font-weight: 700; font-size: 13px; line-height: 13px; }
.apps .mail { position: relative; }
.mail span, .notif span { position: absolute; border-radius: 6px; background: #3b3f45; border: 1px solid #aaa; font-size: 7px; line-height: 9px; font-weight: 700; }
.mail span { right: 2px; bottom: 0; width: 13px; height: 11px; }
.tray { display: flex; margin-left: auto; }
.helpic { width: 15px; margin-right: 57px; }
.weather { gap: 6px; width: 67px; margin-right: 6px; white-space: nowrap; justify-content: flex-start; }
.sun { width: 12px; height: 12px; border-radius: 50%; background: linear-gradient(135deg, #ffd23c, #f59220); }
.icons { display: flex; width: 124px; }
.icons button { flex: 1; }
.clock { width: 41px; flex-direction: column; font-size: 7px; line-height: 11px; }
.notif { width: 33px; position: relative; }
.notif span { right: 10px; bottom: 2px; width: 10px; height: 10px; line-height: 8px; }
```
